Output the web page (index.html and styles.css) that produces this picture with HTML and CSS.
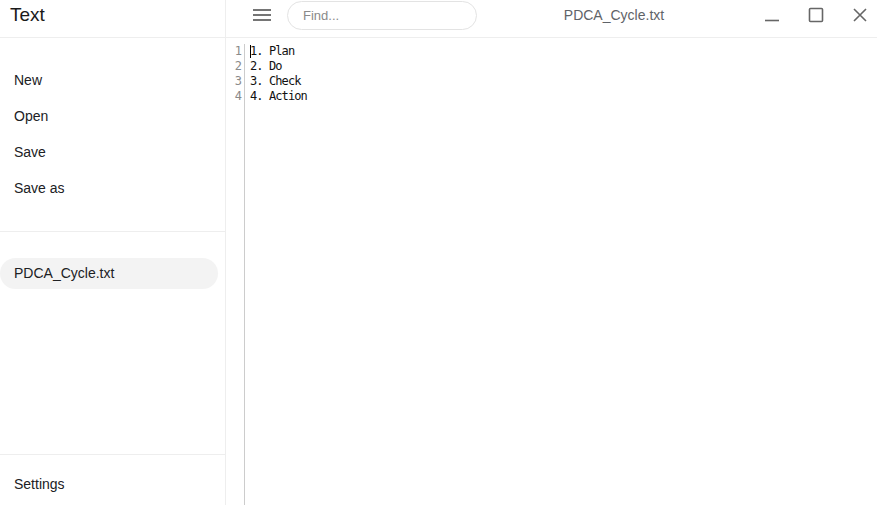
FILE: index.html
```html
<!DOCTYPE html>
<html>
<head>
<meta charset="utf-8">
<link rel="stylesheet" href="styles.css">
</head>
<body>
<div class="app">
  <aside class="sidebar">
    <div class="side-head">Text</div>
    <nav class="menu">
      <div class="menu-item">New</div>
      <div class="menu-item">Open</div>
      <div class="menu-item">Save</div>
      <div class="menu-item">Save as</div>
    </nav>
    <div class="files">
      <div class="file active">PDCA_Cycle.txt</div>
    </div>
    <div class="settings">
      <div class="menu-item">Settings</div>
    </div>
  </aside>
  <main class="main">
    <header class="topbar">
      <button class="hamburger" aria-label="menu">
        <svg width="18" height="14" viewBox="0 0 18 14"><g stroke="#757575" stroke-width="2"><line x1="0" y1="2" x2="18" y2="2"/><line x1="0" y1="7" x2="18" y2="7"/><line x1="0" y1="12" x2="18" y2="12"/></g></svg>
      </button>
      <div class="search">Find...</div>
      <div class="title">PDCA_Cycle.txt</div>
      <div class="controls">
        <svg class="ctl" width="16" height="16" viewBox="0 0 16 16"><line x1="1" y1="13.5" x2="15" y2="13.5" stroke="#666" stroke-width="1.6"/></svg>
        <svg class="ctl" width="16" height="16" viewBox="0 0 16 16"><rect x="1.5" y="1.5" width="13" height="13" rx="1" fill="none" stroke="#666" stroke-width="1.6"/></svg>
        <svg class="ctl" width="16" height="16" viewBox="0 0 16 16"><path d="M2 2 L14 14 M14 2 L2 14" stroke="#666" stroke-width="1.6"/></svg>
      </div>
    </header>
    <section class="editor">
      <div class="gutter">
        <div>1</div><div>2</div><div>3</div><div>4</div>
      </div>
      <div class="code">
        <div class="line"><span class="caret"></span>1. Plan</div>
        <div class="line">2. Do</div>
        <div class="line">3. Check</div>
        <div class="line">4. Action</div>
      </div>
    </section>
  </main>
</div>
</body>
</html>
```
FILE: styles.css
```css
* { box-sizing: border-box; }
html, body { margin: 0; padding: 0; height: 100%; }
body {
  font-family: "Liberation Sans", Arial, sans-serif;
  color: #202124;
  background: #fff;
}
.app {
  display: flex;
  width: 877px;
  height: 505px;
}
.sidebar {
  width: 226px;
  flex: none;
  border-right: 1px solid #eeeeee;
  display: flex;
  flex-direction: column;
}
.side-head {
  height: 38px;
  border-bottom: 1px solid #eeeeee;
  padding-left: 10px;
  font-size: 19px;
  line-height: 30px;
  color: #1a1a1a;
}
.menu {
  padding: 24px 0 25px;
  border-bottom: 1px solid #eeeeee;
}
.menu-item {
  height: 36px;
  line-height: 36px;
  padding-left: 14px;
  font-size: 14px;
  color: #202124;
}
.files {
  flex: 1;
  padding-top: 26px;
  padding-right: 7px;
}
.file {
  height: 31px;
  line-height: 31px;
  padding-left: 14px;
  font-size: 14px;
  border-radius: 16px;
}
.file.active { background: #f3f3f3; }
.settings {
  border-top: 1px solid #eeeeee;
  padding: 11px 0 3px;
}
.main {
  flex: 1;
  display: flex;
  flex-direction: column;
  min-width: 0;
}
.topbar {
  height: 38px;
  border-bottom: 1px solid #eeeeee;
  display: flex;
  align-items: flex-start;
  padding-left: 27px;
}
.hamburger {
  border: 0;
  background: none;
  padding: 0;
  margin-top: 8px;
  width: 18px;
  height: 14px;
  display: block;
}
.hamburger svg { display: block; }
.search {
  margin-left: 16px;
  margin-top: 1px;
  width: 190px;
  height: 29px;
  border: 1px solid #e3e3e3;
  border-radius: 15px;
  padding-left: 15px;
  font-size: 13px;
  line-height: 27px;
  color: #8a8a8a;
}
.title {
  flex: 1;
  text-align: center;
  font-size: 14px;
  line-height: 30px;
  color: #5f6368;
  padding-left: 82px;
}
.controls {
  display: flex;
  gap: 28px;
  padding-right: 9px;
  padding-top: 7px;
  margin-left: 95px;
}
.ctl { display: block; }
.editor {
  flex: 1;
  display: flex;
  padding-top: 6px;
}
.gutter {
  width: 19px;
  border-right: 1px solid #cccccc;
  text-align: right;
  padding-right: 3px;
  font-family: "DejaVu Sans Mono", monospace;
  font-size: 12px;
  letter-spacing: -0.9px;
  line-height: 15px;
  color: #8a8a8a;
}
.code {
  padding-left: 5px;
  font-family: "DejaVu Sans Mono", monospace;
  font-size: 12px;
  letter-spacing: -0.9px;
  line-height: 15px;
  color: #111;
}
.line { position: relative; white-space: pre; }
.caret {
  position: absolute;
  left: 0;
  top: 1px;
  width: 1px;
  height: 13px;
  background: #000;
}
```
